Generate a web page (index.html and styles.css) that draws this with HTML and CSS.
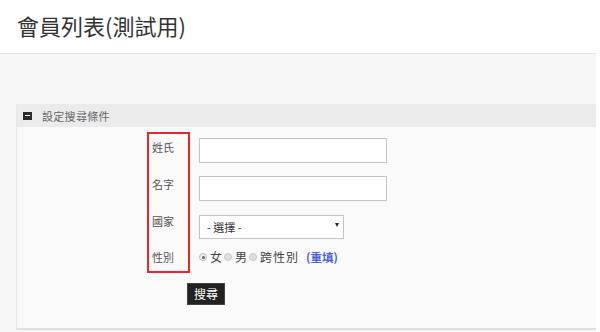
FILE: index.html
```html
<!DOCTYPE html>
<html lang="zh-Hant">
<head>
<meta charset="utf-8">
<title>會員列表(測試用)</title>
<link rel="stylesheet" href="styles.css">
</head>
<body>
<div class="page">
  <header class="top">
    <h1 class="title">會員列表(測試用)</h1>
  </header>
  <main class="main">
    <section class="panel">
      <div class="panel-head">
        <span class="toggle"></span>
        <span class="panel-title">設定搜尋條件</span>
      </div>
      <form class="panel-body">
        <div class="grid">
          <div class="highlight"></div>
          <div class="label r1">姓氏</div>
          <div class="field r1"><input class="text" type="text"></div>
          <div class="label r2">名字</div>
          <div class="field r2"><input class="text" type="text"></div>
          <div class="label r3">國家</div>
          <div class="field r3">
            <div class="select-wrap">
              <select class="select"><option>- 選擇 -</option></select>
            </div>
          </div>
          <div class="label r4">性別</div>
          <div class="field r4 radios">
            <span class="radio checked"></span><span class="opt">女</span>
            <span class="radio"></span><span class="opt">男</span>
            <span class="radio"></span><span class="opt wide">跨性別</span>
            <a class="reset" href="#">(重填)</a>
          </div>
        </div>
        <div class="actions">
          <button class="btn" type="button">搜尋</button>
        </div>
      </form>
    </section>
  </main>
</div>
</body>
</html>
```
FILE: styles.css
```css
* { box-sizing: border-box; }
html, body { margin: 0; padding: 0; background: #fff; }
body {
  font-family: "Noto Sans CJK TC", "Noto Sans", "Liberation Sans", sans-serif;
  color: #555;
}
.page { width: 596px; height: 332px; overflow: hidden; }

.top { height: 53px; padding: 14px 0 0 17px; }
.title {
  margin: 0;
  font-size: 22px;
  line-height: 22px;
  font-weight: 400;
  color: #333;
}

.main {
  height: 279px;
  background: #f7f7f7;
  border-top: 1px solid #e3e3e3;
  padding: 50px 0 0 17px;
}

.panel {
  background: #fafafa;
  border-bottom: 2px solid #e0e0e0;
  box-shadow: -1px 0 1px rgba(0,0,0,0.06);
}
.panel-head {
  height: 23px;
  background: #ebebeb;
  display: flex;
  align-items: center;
  padding-left: 6px;
}
.toggle {
  width: 9px;
  height: 8px;
  background: #2b2b2b;
  position: relative;
  margin-right: 10px;
}
.toggle::after {
  content: "";
  position: absolute;
  left: 2px;
  right: 2px;
  top: 3.5px;
  height: 1px;
  background: #fff;
}
.panel-title {
  font-size: 11px;
  letter-spacing: 0.3px;
  color: #666;
  line-height: 14px;
}

.panel-body { padding: 5px 0 23px 0; margin: 0; }

.grid {
  display: grid;
  grid-template-columns: 130px 43px 9px 190px;
  grid-template-rows: 37px 37px 36px 31px;
}
.highlight {
  grid-column: 2;
  grid-row: 1 / 5;
  border: 2px solid #e8262b;
}
.label {
  grid-column: 2;
  padding: 7px 0 0 5px;
  font-size: 11px;
  line-height: 16px;
  color: #555;
}
.field { grid-column: 4; padding-top: 6px; }
.r1 { grid-row: 1; }
.r2 { grid-row: 2; }
.r3 { grid-row: 3; }
.r4 { grid-row: 4; }

.text {
  display: block;
  width: 188px;
  height: 25px;
  margin: 0;
  border: 1px solid #c4c4c4;
  background: #fff;
  padding: 0 4px;
}
.field.r2 .text { margin-top: 1px; }
.field.r3 { padding-top: 7px; }

.select-wrap {
  position: relative;
  width: 145px;
  height: 24px;
}
.select-wrap::after {
  content: "";
  position: absolute;
  right: 5px;
  top: 10px;
  border-left: 2.5px solid transparent;
  border-right: 2.5px solid transparent;
  border-top: 4px solid #222;
}
.select {
  -webkit-appearance: none;
  appearance: none;
  width: 145px;
  height: 24px;
  margin: 0;
  border: 1px solid #c4c4c4;
  border-radius: 0;
  background: #fff;
  padding: 0 0 0 7px;
  font-family: inherit;
  font-size: 11px;
  color: #333;
}

.radios {
  padding-top: 7px;
  display: flex;
  align-items: center;
  height: 23px;
  font-size: 12px;
  line-height: 16px;
  color: #444;
}
.radio {
  width: 8px;
  height: 8px;
  border-radius: 50%;
  background: #e0e0e0;
  border: 1px solid #c8c8c8;
  margin: 0 3px 0 0;
  position: relative;
  flex: none;
}
.radio.checked { background: #eee; border-color: #bbb; }
.radio.checked::after {
  content: "";
  position: absolute;
  left: 1.5px; top: 1.5px;
  width: 3px; height: 3px;
  border-radius: 50%;
  background: #666;
}
.opt { margin-right: 2px; }
.opt.wide { letter-spacing: 1px; }
.reset {
  margin-left: 5px;
  color: #4a63d8;
  text-decoration: none;
  font-weight: 700;
  font-size: 11.5px;
}

.actions { padding: 10px 0 0 170px; }
.btn {
  display: block;
  width: 38px;
  height: 22px;
  margin: 0;
  padding: 0;
  border: 1px solid #444;
  background: #222;
  color: #fff;
  font-family: inherit;
  font-size: 12px;
  line-height: 18px;
  border-radius: 0;
}
```
